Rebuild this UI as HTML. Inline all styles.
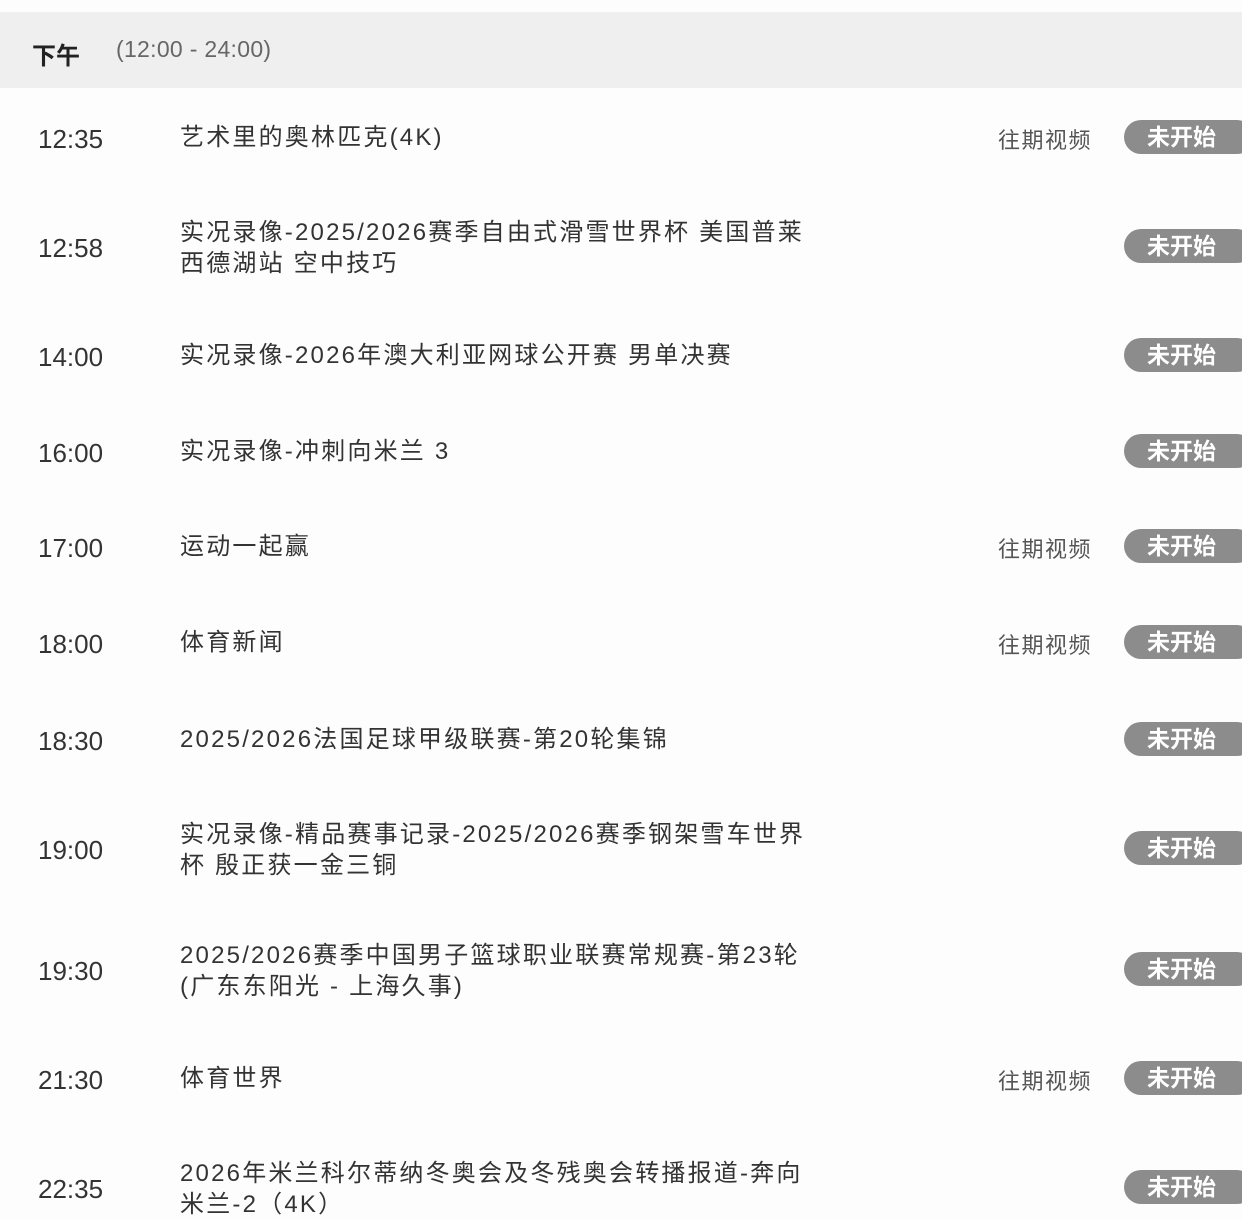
<!DOCTYPE html>
<html><head><meta charset="utf-8"><style>
body{margin:0;width:1242px;height:1209px;overflow:hidden;background:#fdfdfd;font-family:"Liberation Sans","Noto Sans CJK SC",sans-serif;color:#2e2e2e;position:relative}
.hd{position:absolute;left:0;top:12px;width:1242px;height:76px;background:#efeff0}
.hd b{position:absolute;left:32px;top:24px;font-size:24px;font-weight:bold;color:#222}
.hd span{position:absolute;left:116px;top:24px;font-size:23px;color:#666;letter-spacing:0.3px}
.r{position:absolute;left:0;width:1242px;height:0}
.t{position:absolute;left:38px;top:-13px;font-size:26px;color:#333}
.n{position:absolute;left:180px;font-size:24px;line-height:31px;color:#333;width:700px;letter-spacing:2.2px}
.p{position:absolute;left:998px;top:-14px;font-size:22px;color:#555;letter-spacing:1.5px}
.b{position:absolute;left:1124px;top:-17px;width:130px;height:34px;border-radius:17px;background:#8c8c8c;color:#fff;font-size:23px;font-weight:bold;text-align:left;line-height:34px;box-sizing:border-box;padding-left:23px}
</style></head><body>
<div class="hd"><b>下午</b><span>(12:00 - 24:00)</span></div>
<div class="r" style="top:137px"><div class="t">12:35</div><div class="n" style="top:-15px">艺术里的奥林匹克(4K)</div><div class="p">往期视频</div><div class="b">未开始</div></div>
<div class="r" style="top:246px"><div class="t">12:58</div><div class="n" style="top:-29px">实况录像-2025/2026赛季自由式滑雪世界杯 美国普莱<br>西德湖站 空中技巧</div><div class="b">未开始</div></div>
<div class="r" style="top:355px"><div class="t">14:00</div><div class="n" style="top:-15px">实况录像-2026年澳大利亚网球公开赛 男单决赛</div><div class="b">未开始</div></div>
<div class="r" style="top:451px"><div class="t">16:00</div><div class="n" style="top:-15px">实况录像-冲刺向米兰 3</div><div class="b">未开始</div></div>
<div class="r" style="top:546px"><div class="t">17:00</div><div class="n" style="top:-15px">运动一起赢</div><div class="p">往期视频</div><div class="b">未开始</div></div>
<div class="r" style="top:642px"><div class="t">18:00</div><div class="n" style="top:-15px">体育新闻</div><div class="p">往期视频</div><div class="b">未开始</div></div>
<div class="r" style="top:739px"><div class="t">18:30</div><div class="n" style="top:-15px">2025/2026法国足球甲级联赛-第20轮集锦</div><div class="b">未开始</div></div>
<div class="r" style="top:848px"><div class="t">19:00</div><div class="n" style="top:-29px">实况录像-精品赛事记录-2025/2026赛季钢架雪车世界<br>杯 殷正获一金三铜</div><div class="b">未开始</div></div>
<div class="r" style="top:969px"><div class="t">19:30</div><div class="n" style="top:-29px">2025/2026赛季中国男子篮球职业联赛常规赛-第23轮<br>(广东东阳光 - 上海久事)</div><div class="b">未开始</div></div>
<div class="r" style="top:1078px"><div class="t">21:30</div><div class="n" style="top:-15px">体育世界</div><div class="p">往期视频</div><div class="b">未开始</div></div>
<div class="r" style="top:1187px"><div class="t">22:35</div><div class="n" style="top:-29px">2026年米兰科尔蒂纳冬奥会及冬残奥会转播报道-奔向<br>米兰-2（4K）</div><div class="b">未开始</div></div>
</body></html>
